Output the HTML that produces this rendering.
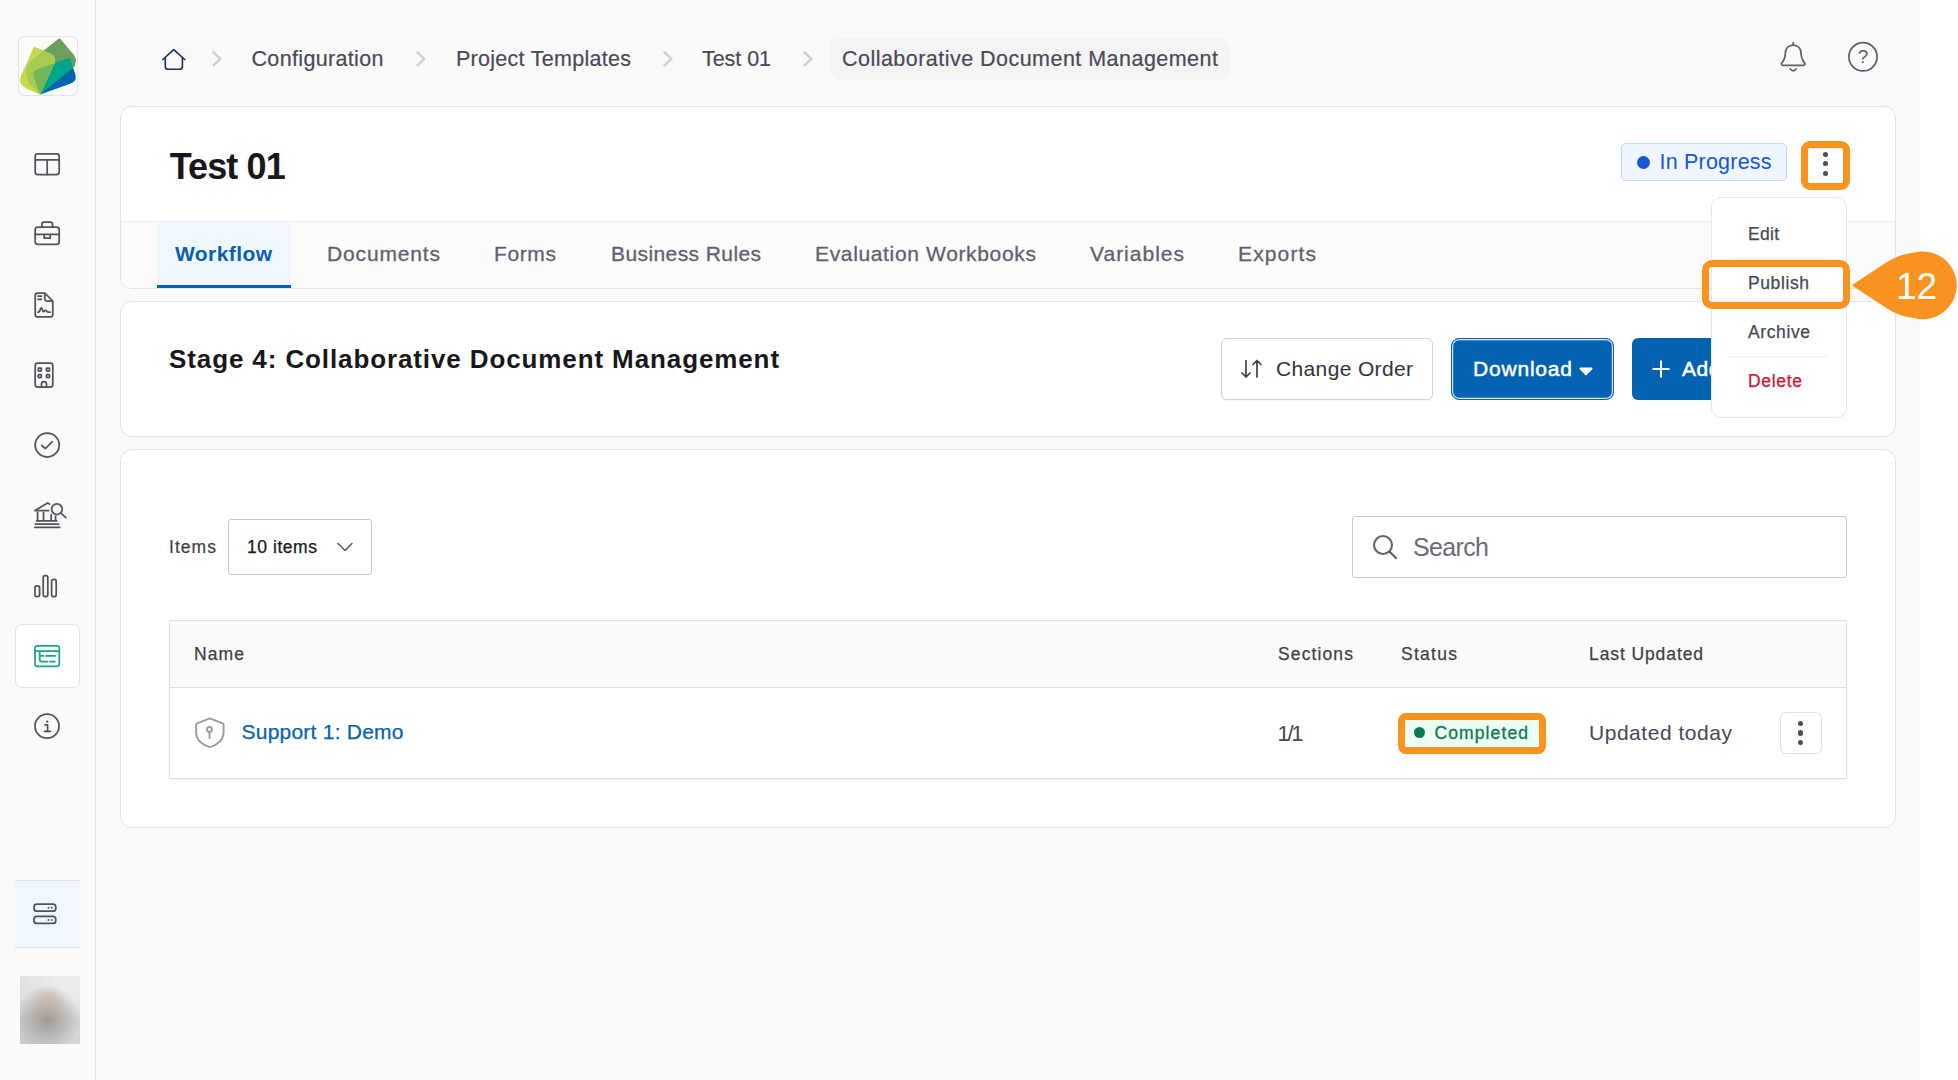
<!DOCTYPE html>
<html lang="en">
<head>
<meta charset="utf-8">
<title>Test 01 - Collaborative Document Management</title>
<style>
*{box-sizing:border-box;margin:0;padding:0}
html,body{width:1958px;height:1080px;overflow:hidden;background:#fff}
body{position:relative;font-family:"Liberation Sans",sans-serif;color:#3f3f46}
.abs{position:absolute}
.t{position:absolute;white-space:nowrap;line-height:1;display:block}
#main{position:absolute;left:0;top:0;width:1920px;height:1080px;background:#fafafa}
#side{position:absolute;left:0;top:0;width:96px;height:1080px;background:#fafafa;border-right:1px solid #e4e4e7}
.card{position:absolute;left:120px;width:1776px;background:#fff;border:1px solid #e3e3e7;border-radius:12px}
svg{position:absolute;overflow:visible}
.ic{fill:none;stroke:#4a4a55;stroke-width:1.6;stroke-linecap:round;stroke-linejoin:round}
</style>
</head>
<body>
<div id="main">

<!-- breadcrumb -->
<div id="crumbs">
<svg style="left:150px;top:35px" width="700" height="50" viewBox="150 35 700 50"><path class="ic" style="stroke:#1b2f5b;stroke-width:1.600;stroke-linecap:butt" d="M162.300 60 L173.700 49.700 L185.300 60 M165.300 57.500 V66.400 Q165.300 69.200 168.100 69.200 H179.600 Q182.400 69.200 182.400 66.400 V57.500"/><g class="ic" style="stroke:#cfcfd7;stroke-width:2.400;stroke-linecap:butt;stroke-linejoin:round"><path d="M212.8 51.700 L220.5 58.800 L212.8 66"/><path d="M416.6 51.700 L424.3 58.800 L416.6 66"/><path d="M663.8 51.700 L671.5 58.800 L663.8 66"/><path d="M803.8 51.700 L811.5 58.800 L803.8 66"/></g></svg>
<span class="t" style="left:251.5px;top:49.300px;font-size:21.500px;color:#494957;-webkit-text-stroke:0.200px;letter-spacing:0.34px">Configuration</span>
<span class="t" style="left:456px;top:49.300px;font-size:21.500px;color:#494957;-webkit-text-stroke:0.200px;letter-spacing:0.28px">Project Templates</span>
<span class="t" style="left:702px;top:49.300px;font-size:21.500px;color:#494957;-webkit-text-stroke:0.200px;letter-spacing:-0.05px">Test 01</span>
<div class="abs" style="left:830px;top:38px;width:400px;height:42px;background:#f4f4f5;border-radius:10px"></div>
<span class="t" style="left:842px;top:49.300px;font-size:21.500px;color:#494957;-webkit-text-stroke:0.200px;letter-spacing:0.47px">Collaborative Document Management</span>
</div>

<!-- top right icons -->
<svg style="left:1760px;top:30px" width="140" height="60" viewBox="1760 30 140 60"><g class="ic" style="stroke:#5d5d69;stroke-width:1.750"><path d="M1793.200 42.600 V45 M1793.200 45.100 C1788.500 45.100 1785.600 48.600 1785.400 53 C1785.300 56 1785 58.200 1783.600 60.200 L1781.800 63 C1781 64.300 1781.600 65.300 1783 65.300 H1803.400 C1804.800 65.300 1805.400 64.300 1804.600 63 L1802.800 60.200 C1801.400 58.200 1801.100 56 1801 53 C1800.800 48.600 1797.900 45.100 1793.200 45.100 Z M1790.200 69 Q1793.200 72.600 1796.200 69"/><circle cx="1863" cy="56.800" r="14.100"/></g></svg>
<span class="t" style="left:1857px;top:46.500px;font-size:19px;color:#5d5d69;width:12px;text-align:center">?</span>

<!-- card 1 -->
<div class="card" style="top:106px;height:183px;overflow:hidden">
  <div class="abs" style="left:0;top:114px;width:1776px;height:68px;background:#fcfcfc;border-top:1px solid #ececef"></div>
  <div class="abs" style="left:36px;top:115px;width:134px;height:66px;background:#f0f8ff;border-bottom:3px solid #0363b2"></div>
</div>
<span class="t" style="left:169.700px;top:148.500px;font-size:36px;font-weight:bold;color:#18181b;letter-spacing:-0.90px">Test 01</span>
<div class="abs" style="left:1621px;top:143px;width:166px;height:38px;background:#eff6ff;border:1px solid #b8dcfb;border-radius:5px"></div>
<div class="abs" style="left:1637px;top:156px;width:13px;height:13px;border-radius:50%;background:#1a56d4"></div>
<span class="t" style="left:1659.500px;top:151.800px;font-size:21.500px;color:#1a56d4;letter-spacing:0.21px">In Progress</span>
<div class="abs" id="kebab1" style="left:1801px;top:141px;width:49px;height:49px;border:7px solid #f7931e;border-radius:9px;background:#fff"></div>
<div class="abs" style="left:1823px;top:152px;width:5.200px;height:5.200px;border-radius:50%;background:#4b4b59"></div>
<div class="abs" style="left:1823px;top:161px;width:5.200px;height:5.200px;border-radius:50%;background:#4b4b59"></div>
<div class="abs" style="left:1823px;top:170.500px;width:5.200px;height:5.200px;border-radius:50%;background:#4b4b59"></div>

<!-- tabs -->
<span class="t" style="left:175px;top:242.600px;font-size:21px;font-weight:bold;color:#0860ae;letter-spacing:0.41px">Workflow</span>
<span class="t" style="left:327px;top:242.600px;font-size:21px;color:#5f6172;-webkit-text-stroke:0.300px;letter-spacing:0.85px">Documents</span>
<span class="t" style="left:494px;top:242.600px;font-size:21px;color:#5f6172;-webkit-text-stroke:0.300px;letter-spacing:0.62px">Forms</span>
<span class="t" style="left:611px;top:242.600px;font-size:21px;color:#5f6172;-webkit-text-stroke:0.300px;letter-spacing:0.41px">Business Rules</span>
<span class="t" style="left:815px;top:242.600px;font-size:21px;color:#5f6172;-webkit-text-stroke:0.300px;letter-spacing:0.65px">Evaluation Workbooks</span>
<span class="t" style="left:1090px;top:242.600px;font-size:21px;color:#5f6172;-webkit-text-stroke:0.300px;letter-spacing:1.00px">Variables</span>
<span class="t" style="left:1238px;top:242.600px;font-size:21px;color:#5f6172;-webkit-text-stroke:0.300px;letter-spacing:1.13px">Exports</span>

<!-- card 2 -->
<div class="card" style="top:301px;height:136px"></div>
<span class="t" style="left:169px;top:346.300px;font-size:26px;font-weight:bold;color:#18181b;letter-spacing:0.89px">Stage 4: Collaborative Document Management</span>
<div class="abs" style="left:1221px;top:338px;width:212px;height:62px;background:#fff;border:1px solid #d2d2d8;border-radius:6px;box-shadow:0 1px 2px rgba(0,0,0,0.060)"></div>
<svg style="left:1240px;top:358px" width="24" height="22" viewBox="0 0 24 22"><path class="ic" style="stroke:#3f3f46;stroke-width:1.7" d="M6 2.500 V19 M2 15 L6 19 L10 15 M17 19 V2.500 M13 6.500 L17 2.500 L21 6.500"/></svg>
<span class="t" style="left:1276px;top:358px;font-size:21px;color:#33333b;letter-spacing:0.36px">Change Order</span>
<div class="abs" style="left:1451px;top:338px;width:163px;height:62px;background:#0363b2;border-radius:8px;border:1px solid #0363b2;box-shadow:inset 0 0 0 1.200px rgba(255,255,255,0.850)"></div>
<span class="t" style="left:1473px;top:358px;font-size:21px;color:#fff;-webkit-text-stroke:0.5px #fff;letter-spacing:0.80px">Download</span>
<svg style="left:1579px;top:366.500px" width="14" height="9" viewBox="0 0 14 9"><path d="M1.500 1.500 H12.500 L7 7.300 Z" fill="#fff" stroke="#fff" stroke-width="2" stroke-linejoin="round"/></svg>
<div class="abs" style="left:1632px;top:338px;width:120px;height:62px;background:#0363b2;border-radius:6px"></div>
<svg style="left:1650.500px;top:359px" width="20" height="20" viewBox="0 0 20 20"><path d="M10 1.500 V18.500 M1.500 10 H18.500" stroke="#fff" stroke-width="2" fill="none"/></svg>
<span class="t" style="left:1682px;top:358px;font-size:21px;color:#fff;-webkit-text-stroke:0.5px #fff;letter-spacing:0.5px">Add</span>

<!-- card 3 -->
<div class="card" style="top:449px;height:379px"></div>
<span class="t" style="left:169px;top:539.300px;font-size:17.5px;color:#3f3f46;-webkit-text-stroke:0.200px;letter-spacing:1.05px">Items</span>
<div class="abs" style="left:228px;top:519px;width:144px;height:56px;background:#fff;border:1px solid #c8c8d0;border-radius:3px"></div>
<span class="t" style="left:247px;top:539.300px;font-size:17.5px;color:#18181b;-webkit-text-stroke:0.250px;letter-spacing:0.55px">10 items</span>
<svg style="left:336px;top:541px" width="18" height="12" viewBox="0 0 18 12"><path class="ic" style="stroke:#5d5d6b;stroke-width:1.600" d="M2 2.500 L9 9.500 L16 2.500"/></svg>
<div class="abs" style="left:1352px;top:516px;width:495px;height:62px;background:#fff;border:1px solid #c8c8d0;border-radius:3px"></div>
<svg style="left:1371px;top:533px" width="28" height="28" viewBox="0 0 28 28"><circle class="ic" style="stroke:#62626e;stroke-width:2.100" cx="12" cy="12" r="9"/><path class="ic" style="stroke:#62626e;stroke-width:2.300" d="M18.500 18.500 L25 25"/></svg>
<span class="t" style="left:1413px;top:535px;font-size:25px;color:#6b6b78;letter-spacing:-0.64px">Search</span>

<!-- table -->
<div class="abs" style="left:169px;top:620px;width:1678px;height:159px;border:1px solid #dedee2;background:#fff;box-shadow:0 1px 2px rgba(0,0,0,0.050)"></div>
<div class="abs" style="left:170px;top:621px;width:1676px;height:67px;background:#fafafa;border-bottom:1px solid #dedee2"></div>
<span class="t" style="left:194px;top:646px;font-size:17.5px;-webkit-text-stroke:0.25px;color:#3f3f46;letter-spacing:1.10px">Name</span>
<span class="t" style="left:1278px;top:646px;font-size:17.5px;-webkit-text-stroke:0.25px;color:#3f3f46;letter-spacing:1.12px">Sections</span>
<span class="t" style="left:1401px;top:646px;font-size:17.5px;-webkit-text-stroke:0.25px;color:#3f3f46;letter-spacing:1.27px">Status</span>
<span class="t" style="left:1589px;top:646px;font-size:17.5px;-webkit-text-stroke:0.25px;color:#3f3f46;letter-spacing:0.90px">Last Updated</span>

<svg style="left:190px;top:712px" width="40" height="40" viewBox="190 712 40 40"><g class="ic" style="stroke:#9a9aa6;stroke-width:1.900"><path d="M209.800 718.300 L222.600 723.300 Q223.600 723.700 223.600 724.800 V732 C223.600 739 218 744.500 209.800 747.200 C201.600 744.500 196.100 739 196.100 732 V724.800 Q196.100 723.700 197.100 723.300 Z"/><circle cx="209.500" cy="729.400" r="2.500"/><path d="M209.500 732 V738"/></g></svg>
<span class="t" style="left:241.500px;top:721.300px;font-size:21px;color:#0662b0;-webkit-text-stroke:0.250px;letter-spacing:0.23px">Support 1: Demo</span>
<span class="t" style="left:1277.500px;top:723.400px;font-size:22px;color:#484855;letter-spacing:-2.30px">1/1</span>
<div class="abs" style="left:1398px;top:713px;width:148px;height:41px;border:7px solid #f7931e;border-radius:8px;background:#ecfdf5"></div>
<div class="abs" style="left:1413.7px;top:726.8px;width:11.6px;height:11.6px;border-radius:50%;background:#0a7a4e"></div>
<span class="t" style="left:1434.5px;top:725px;font-size:17.5px;color:#0a7a4e;-webkit-text-stroke:0.300px;letter-spacing:1.11px">Completed</span>
<span class="t" style="left:1589px;top:721.700px;font-size:21px;color:#484855;letter-spacing:0.53px">Updated today</span>
<div class="abs" style="left:1780px;top:712px;width:42px;height:42px;border:1px solid #e0e0e4;border-radius:6px;background:#fff"></div>
<div class="abs" style="left:1797.700px;top:720.8px;width:5.600px;height:5.600px;border-radius:50%;background:#4b4b59"></div>
<div class="abs" style="left:1797.700px;top:730.4px;width:5.600px;height:5.600px;border-radius:50%;background:#4b4b59"></div>
<div class="abs" style="left:1797.700px;top:739.7px;width:5.600px;height:5.600px;border-radius:50%;background:#4b4b59"></div>

<!-- dropdown menu -->
<div class="abs" style="left:1711px;top:197px;width:136px;height:221px;background:#fff;border:1px solid #e8e8eb;border-radius:10px"></div>
<span class="t" style="left:1748px;top:226px;font-size:17.5px;color:#474754;-webkit-text-stroke:0.250px;letter-spacing:0.28px">Edit</span>
<div class="abs" style="left:1702px;top:260px;width:148px;height:49px;border:7px solid #f7931e;border-radius:10px"></div>
<span class="t" style="left:1748px;top:275px;font-size:17.5px;color:#474754;-webkit-text-stroke:0.250px;letter-spacing:0.60px">Publish</span>
<span class="t" style="left:1748px;top:324px;font-size:17.5px;color:#474754;-webkit-text-stroke:0.250px;letter-spacing:0.61px">Archive</span>
<div class="abs" style="left:1730px;top:356px;width:98px;height:1px;background:#f0f0f2"></div>
<div class="abs" style="left:1730px;top:258px;width:98px;height:1px;background:#f0f0f2"></div>
<span class="t" style="left:1748px;top:373px;font-size:17.5px;color:#d2122e;-webkit-text-stroke:0.250px;letter-spacing:0.68px">Delete</span>

</div><!-- /main -->

<!-- callout -->
<svg style="left:1848px;top:248px" width="110" height="76" viewBox="1848 248 110 76"><path d="M1851.700 285.200 L1887 262 Q1899 254.300 1913 252.850 A33.900 33.900 0 1 1 1913 317.750 Q1899 316.300 1887 308.500 Z" fill="#f7931e"/></svg>
<span class="t" style="left:1896px;top:268px;font-size:37px;color:#fff">12</span>

<!-- sidebar -->
<div id="side">
<!-- logo -->
<div class="abs" style="left:18px;top:36px;width:60px;height:60px;border:1px solid #e4e4e7;border-radius:6px;background:#fbfbfb"></div>
<svg style="left:18px;top:36px" width="60" height="60" viewBox="0 0 60 60">
<defs>
<path id="kG" d="M41.5 2 L55.6 18.6 Q59.6 23.6 56.8 29.4 Q56 31 54.7 32.1 L22.1 58.6 L11.8 48 Q5.4 38.500 9.5 30 Q11.500 26 15 23 Z"/>
<path id="kL" d="M16 10.500 L32 17.500 Q38.600 20.600 36.600 27 L22.100 58.600 L8.400 52.400 Q-0.500 48 3 40 Z"/>
<path id="kB" d="M51.700 22.100 L57.200 38 Q59.600 44.800 52.800 47.500 L22.100 58.600 L16 41.500 Q13.800 35 20 33 Z"/>
<clipPath id="cG"><use href="#kG"/></clipPath>
<clipPath id="cB"><use href="#kB"/></clipPath>
</defs>
<use href="#kG" fill="#6b9f5e"/>
<use href="#kB" fill="#0065ad"/>
<use href="#kB" fill="#00a58c" clip-path="url(#cG)"/>
<use href="#kL" fill="#c5d850"/>
<use href="#kL" fill="#a6cb53" clip-path="url(#cG)"/>
<use href="#kL" fill="#72b857" clip-path="url(#cB)"/>
</svg>
<!-- server bg -->
<div class="abs" style="left:15px;top:880px;width:65px;height:68px;background:#f0f8ff;border-top:1px solid #e2e2ea;border-bottom:1px solid #e2e2ea"></div>
<!-- layout -->
<svg style="left:0;top:0" width="96" height="1080" viewBox="0 0 96 1080">
<g class="ic" style="stroke:#52525b;stroke-width:1.750">
<rect x="35.200" y="153.900" width="24" height="20.700" rx="2.500"/><path d="M35.200 159.800 H59.200 M47.200 159.800 V174.600"/>
<rect x="35.200" y="227" width="24" height="17.300" rx="2.500"/><path d="M41.900 227 V224.200 Q41.900 222.200 43.900 222.200 H50.500 Q52.500 222.200 52.500 224.200 V227 M35.200 234.400 H59.200 M44.200 234.400 V238.200 H50.200 V234.400"/>
<path d="M44.800 293.100 H37.700 Q35.200 293.100 35.200 295.600 V314.400 Q35.200 316.900 37.700 316.900 H50.300 Q52.800 316.900 52.800 314.400 V301 L44.800 293.100 V298.500 Q44.800 301 47.300 301 H52.800 M38 296 H41.500 M38 299.300 H41.500 M38 312.200 C40.500 312.200 40 307.800 41.300 307.800 C42.600 307.800 42.200 312 43.600 311.600 C44.800 311.200 44.600 310 45.800 310.300 C46.800 310.600 46.500 312 48 312 H50.200"/>
<rect x="35.200" y="363.100" width="17.600" height="23.900" rx="2.500"/><rect x="38.300" y="368" width="3" height="3" rx="0.600"/><rect x="46.500" y="368" width="3" height="3" rx="0.600"/><rect x="38.300" y="374.600" width="3" height="3" rx="0.600"/><rect x="46.500" y="374.600" width="3" height="3" rx="0.600"/><path d="M41.500 387 V384 A2.500 2.500 0 0 1 46.500 384 V387"/>
<circle cx="47.200" cy="445" r="12"/><path d="M41.700 445.400 L45.400 448.600 L52.300 441.700"/>
<path d="M48.600 510.500 H35 L47.600 503 L49.500 504 M37.600 512.600 V520.900 M43.500 512.600 V520.900 M51.200 514.500 V520.900 M55.600 516 V520.900 M36.600 520.900 H56.700 M35.300 524.100 H58.600 M34.800 527.400 H59.600"/><circle cx="56.900" cy="509.200" r="5.300"/><path d="M61 513.200 L65.800 517.600"/>
<rect x="35" y="585.800" width="4.600" height="10.700" rx="1.800"/><rect x="43.200" y="575.600" width="4.600" height="20.900" rx="1.800"/><rect x="51.600" y="579.300" width="4.600" height="17.200" rx="1.800"/>
<circle cx="47" cy="726.200" r="12"/><path d="M45 724.900 H47.600 V731.300 M44.500 731.300 H50.500"/>
<rect x="34" y="904.200" width="21.800" height="7" rx="3"/><rect x="34" y="916.400" width="21.800" height="7" rx="3"/>
</g>
<circle cx="47.200" cy="721.600" r="1.200" fill="#52525b"/>
<circle cx="48.500" cy="907.700" r="1" fill="#52525b"/><circle cx="51.800" cy="907.700" r="1" fill="#52525b"/><circle cx="48.500" cy="919.900" r="1" fill="#52525b"/><circle cx="51.800" cy="919.900" r="1" fill="#52525b"/>
</svg>
<!-- active -->
<div class="abs" style="left:15px;top:624px;width:65px;height:64px;background:#fff;border:1px solid #e4e4e7;border-radius:7px"></div>
<svg style="left:30px;top:640px" width="36" height="32" viewBox="30 640 36 32"><g class="ic" style="stroke:#17a589;stroke-width:1.700"><rect x="35" y="645.900" width="24.300" height="20.400" rx="2.500"/><path d="M35 651.200 H59.300 M39.700 651.200 V659.500 Q39.700 661.600 41.800 661.600 H47.500 M39.700 655.900 H43.500 M46 655.900 H55 M50 661.600 H55"/></g></svg>
<!-- avatar -->
<div class="abs" style="left:20px;top:976px;width:60px;height:68px;background:radial-gradient(ellipse 30% 26% at 46% 40%, rgba(200,180,160,0.700) 0%, rgba(200,180,160,0) 100%),radial-gradient(ellipse 54% 50% at 46% 63%, rgba(152,146,142,0.900) 0%, rgba(162,159,157,0.550) 50%, rgba(172,172,172,0) 100%),linear-gradient(90deg, rgba(0,0,0,0.050) 0%, rgba(0,0,0,0) 70%),linear-gradient(180deg,#efeeec 0%,#eae9e7 35%,#d6d6d5 65%,#d4d4d4 100%)"></div>
</div>

</body>
</html>
